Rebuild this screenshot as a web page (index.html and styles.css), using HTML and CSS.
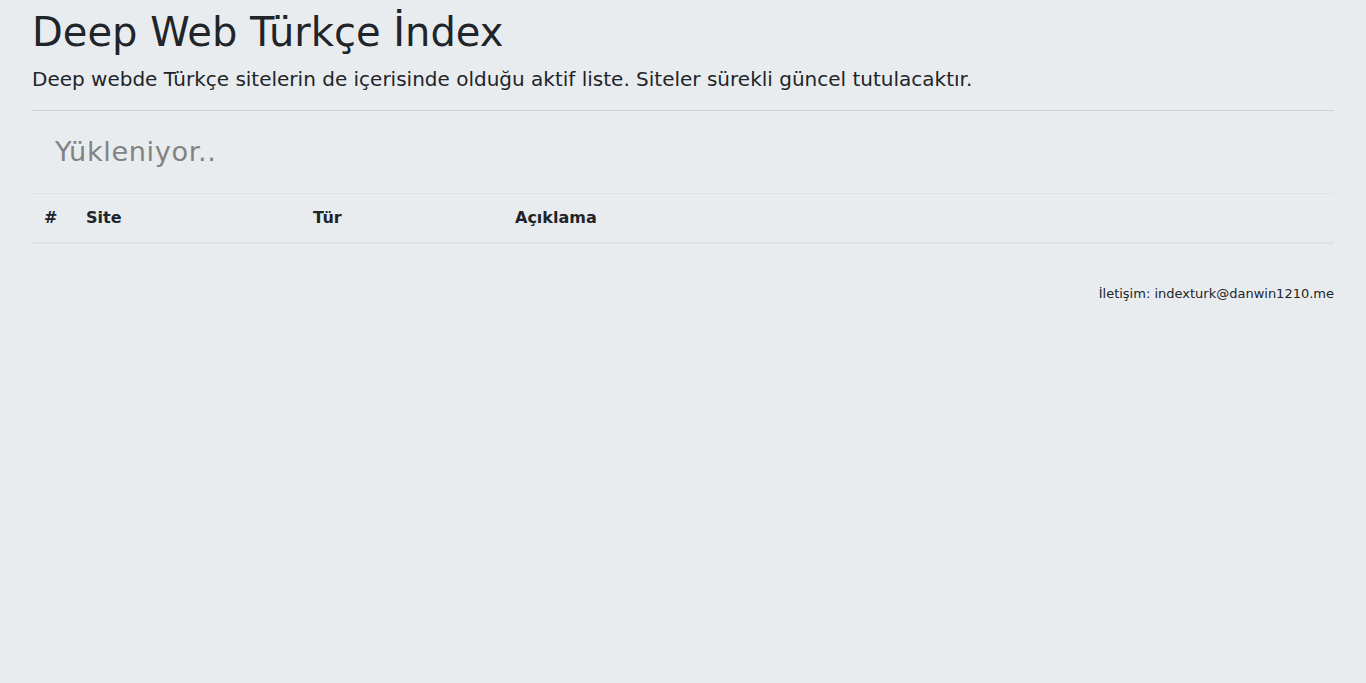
FILE: index.html
```html
<!DOCTYPE html>
<html lang="tr">
<head>
<meta charset="utf-8">
<title>Deep Web Türkçe İndex</title>
<link rel="stylesheet" href="styles.css">
</head>
<body>
<div class="page">
  <header class="intro">
    <h1 class="title">Deep Web Türkçe İndex</h1>
    <p class="lead">Deep webde Türkçe sitelerin de içerisinde olduğu aktif liste. Siteler sürekli güncel tutulacaktır.</p>
  </header>
  <hr class="divider">
  <div class="loading">Yükleniyor..</div>
  <table class="list">
    <thead>
      <tr>
        <th class="col-num">#</th>
        <th class="col-site">Site</th>
        <th class="col-type">Tür</th>
        <th class="col-desc">Açıklama</th>
      </tr>
    </thead>
    <tbody></tbody>
  </table>
  <footer class="contact">İletişim: indexturk@danwin1210.me</footer>
</div>
</body>
</html>
```
FILE: styles.css
```css
html, body {
  margin: 0;
  padding: 0;
  background: #e9ecef;
}
body {
  font-family: "DejaVu Sans", sans-serif;
  color: #212529;
  font-size: 16px;
  line-height: 1.5;
  min-height: 683px;
}
.page {
  padding: 8px 32px 0 32px;
}
.title {
  font-size: 40px;
  font-weight: 400;
  line-height: 1.2;
  margin: 0 0 8px 0;
}
.lead {
  font-size: 20px;
  font-weight: 400;
  line-height: 1.5;
  margin: 0;
}
.divider {
  border: 0;
  border-top: 1px solid rgba(0, 0, 0, 0.1);
  margin: 16px 0 0 0;
  height: 0;
}
.loading {
  font-size: 27.2px;
  font-weight: 400;
  letter-spacing: 0.6px;
  color: #828282;
  padding: 18px 23px;
  line-height: 46px;
}
.list {
  width: 100%;
  border-collapse: collapse;
}
.list th {
  text-align: left;
  font-weight: 700;
  font-size: 16px;
  padding: 12px;
  line-height: 24px;
  border-top: 1px solid #dee2e6;
  border-bottom: 2px solid #dee2e6;
}
.col-num { width: 18px; }
.col-site { width: 203px; }
.col-type { width: 178px; }
.contact {
  text-align: right;
  font-size: 13px;
  padding-top: 40px;
}
```
